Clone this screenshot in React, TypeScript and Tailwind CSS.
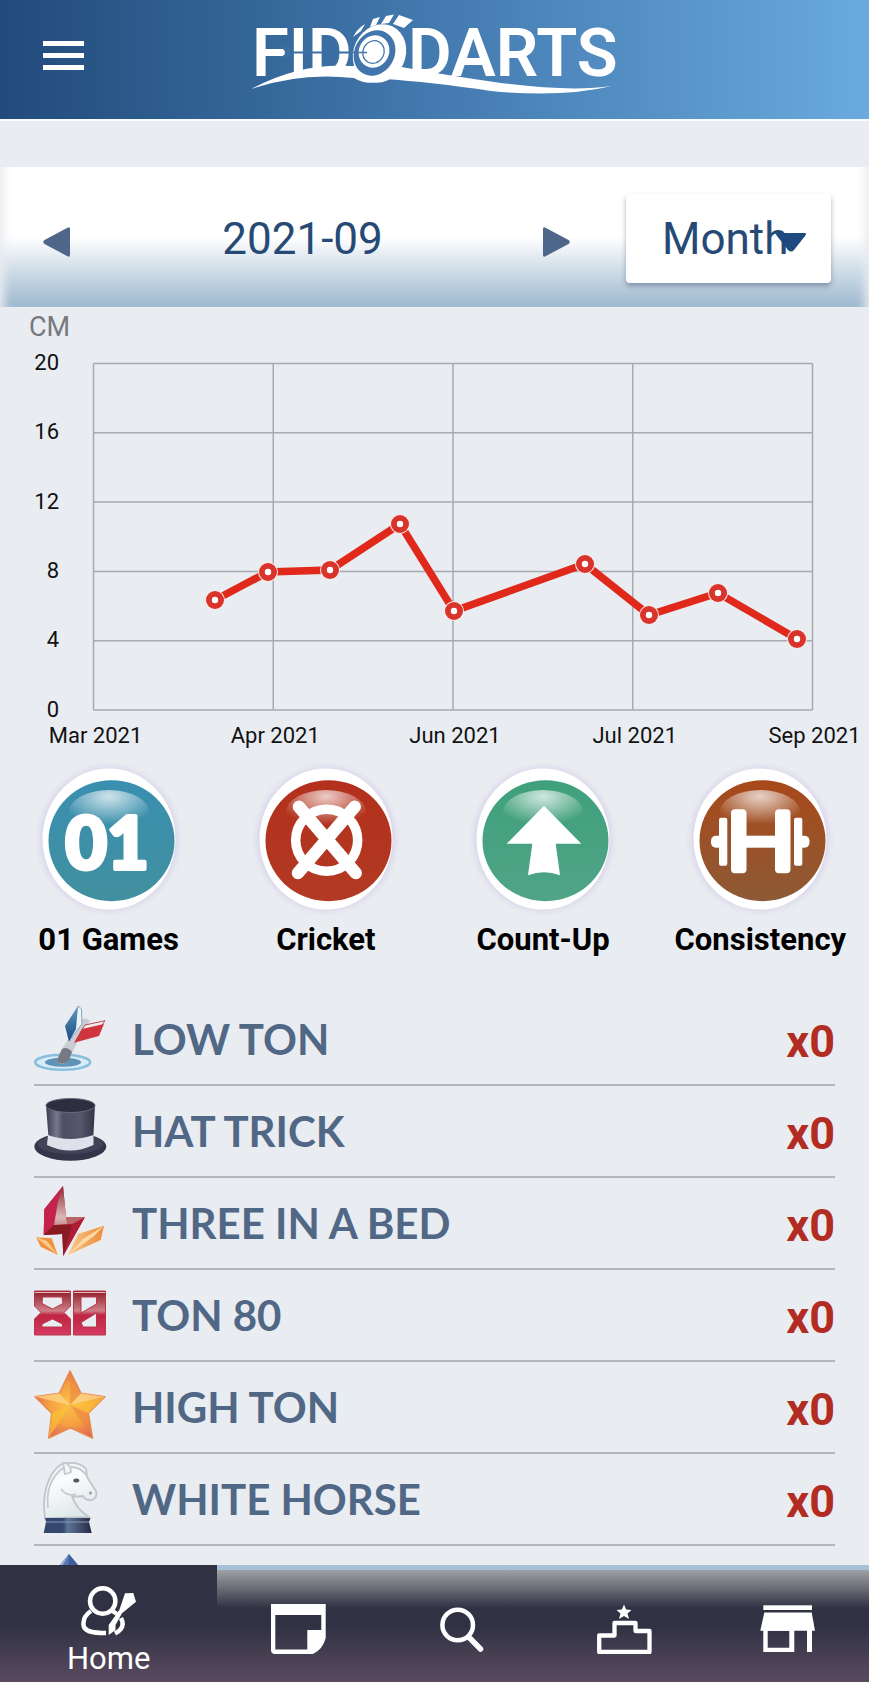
import React from "react"

type Point = { x: number; y: number }

const xLabels = ["Mar 2021", "Apr 2021", "Jun 2021", "Jul 2021", "Sep 2021"]
const yLabels = [20, 16, 12, 8, 4, 0]

const points: Point[] = [
  { x: 215, y: 293 },
  { x: 268, y: 265 },
  { x: 330, y: 263 },
  { x: 400, y: 217 },
  { x: 454, y: 304 },
  { x: 585, y: 257 },
  { x: 649, y: 308 },
  { x: 718, y: 286 },
  { x: 797, y: 332 },
]

const games = [
  { name: "01 Games", top: "#3a8fb0", bottom: "#41909f", icon: <ZeroOneMark /> },
  { name: "Cricket", top: "#b3301c", bottom: "#b23a22", icon: <CricketMark /> },
  { name: "Count-Up", top: "#3fa07c", bottom: "#50a487", icon: <ArrowMark /> },
  { name: "Consistency", top: "#a8491a", bottom: "#8d5a36", icon: <BarbellMark /> },
]

const awards = [
  { name: "LOW TON", count: 0, icon: <DartIcon /> },
  { name: "HAT TRICK", count: 0, icon: <HatIcon /> },
  { name: "THREE IN A BED", count: 0, icon: <BoltIcon /> },
  { name: "TON 80", count: 0, icon: <EightyIcon /> },
  { name: "HIGH TON", count: 0, icon: <StarIcon /> },
  { name: "WHITE HORSE", count: 0, icon: <HorseIcon /> },
]

export default function App() {
  const [period, setPeriod] = React.useState("Month")

  return (
    <div className="flex h-screen flex-col overflow-hidden bg-[#e9ecf1] font-['Roboto',sans-serif]">
      <header className="relative flex h-[119px] shrink-0 items-center justify-center bg-linear-to-r from-[#224b7b] via-[#437aaf] to-[#6aaade]">
        <button aria-label="Menu" className="absolute left-[43px] flex w-[41px] flex-col gap-[7px] pb-2">
          <span className="h-[5px] bg-white" />
          <span className="h-[5px] bg-white" />
          <span className="h-[5px] bg-white" />
        </button>
        <Logo />
      </header>

      <main className="min-h-0 flex-1 overflow-y-auto border-t-2 border-[#f8fafc] [scrollbar-width:none]">
        {/* Period picker */}
        <section className="mt-[46px] flex h-[140px] items-center bg-linear-to-b from-white from-50% to-[#9db8ce] pt-[2px] pr-[38px] pl-[43px] shadow-[inset_12px_0_10px_-8px_#e9ecf1,inset_-12px_0_10px_-8px_#e9ecf1]">
          <div className="mr-14 flex flex-1 items-center justify-between">
            <button aria-label="Previous" className="pt-2">
              <svg viewBox="0 0 27 30" className="h-[30px] w-[27px]" fill="#4d668a">
                <path d="M27 2V28Q27 31 24 29L1.500 17Q-1 15 1.500 13L24 1Q27 -1 27 2Z" />
              </svg>
            </button>
            <span className="pt-[2px] pr-2 text-[44px] leading-none text-[#264a75]">2021-09</span>
            <button aria-label="Next" className="pt-2">
              <svg viewBox="0 0 27 30" className="h-[30px] w-[27px]" fill="#4d668a">
                <path d="M0 2V28Q0 31 3 29L25.500 17Q28 15 25.500 13L3 1Q0 -1 0 2Z" />
              </svg>
            </button>
          </div>
          <div className="relative">
            <select
              aria-label="Period"
              value={period}
              onChange={(e) => setPeriod(e.target.value)}
              className="h-[89px] w-[205px] appearance-none rounded-sm bg-white pt-[2px] pl-9 text-[44px] text-[#264a75] shadow-[0_3px_5px_rgba(60,80,110,0.45)] outline-none"
            >
              <option>Month</option>
            </select>
            <svg viewBox="0 0 30 19" className="pointer-events-none absolute top-[39px] right-[25px] h-[19px] w-[30px]" fill="#1f4a80">
              <path d="M1 0H29Q31 1 29 3L18 17Q15 20 12 17L1 3Q-1 1 1 0Z" />
            </svg>
          </div>
        </section>

        <Chart />

        {/* Games */}
        <section className="grid grid-cols-4 pt-[6px]">
          {games.map((game, i) => (
            <button key={game.name} className="flex flex-col items-center">
              <svg viewBox="0 0 150 156" className="h-[156px] w-[150px] overflow-visible">
                <defs>
                  <linearGradient id={`ball${i}`} x1="0" y1="0" x2="0" y2="1">
                    <stop offset="0" stopColor={game.top} />
                    <stop offset="1" stopColor={game.bottom} />
                  </linearGradient>
                  <radialGradient id={`glow${i}`}>
                    <stop offset="0.850" stopColor="#d3cbe8" />
                    <stop offset="1" stopColor="#e4e2f0" stopOpacity="0" />
                  </radialGradient>
                  <radialGradient id={`shine${i}`} cx="0.500" cy="0.150" r="0.800">
                    <stop offset="0" stopColor="#fff" stopOpacity="0.750" />
                    <stop offset="0.800" stopColor="#fff" stopOpacity="0" />
                  </radialGradient>
                </defs>
                <ellipse cx="75" cy="76" rx="75" ry="78" fill={`url(#glow${i})`} />
                <ellipse cx="75" cy="76" rx="66.500" ry="70.500" fill="#fff" />
                <ellipse cx="77.500" cy="77.700" rx="63" ry="60.500" fill={`url(#ball${i})`} />
                <ellipse cx="75" cy="49" rx="40" ry="22" fill={`url(#shine${i})`} />
                {game.icon}
              </svg>
              <span className="pt-px text-[31px] leading-10 font-bold text-black">{game.name}</span>
            </button>
          ))}
        </section>

        {/* Awards */}
        <ul className="mt-[34px] px-[34px]">
          {awards.map((award) => (
            <li key={award.name} className="flex h-[92px] items-center gap-[26px] border-b-2 border-[#b3b6be]">
              {award.icon}
              <span className="flex-1 font-['Lato',sans-serif] text-[42px] leading-none font-bold text-[#506785]">{award.name}</span>
              <span className="pt-1 text-[45px] leading-none font-bold text-[#b22c24]">x{award.count}</span>
            </li>
          ))}
          <li className="flex h-[92px] items-center">
            <DiamondIcon />
          </li>
        </ul>
      </main>

      <nav className="flex h-[117px] shrink-0 text-white">
        <a
          href="#home"
          className="flex w-1/4 flex-col items-center bg-[linear-gradient(to_bottom,#303243,#303243_52%,#5b4a60)] pt-[21px] text-[31px] leading-9"
        >
          <svg viewBox="0 0 56 50" className="mb-[5px] h-[50px] w-14" fill="none" stroke="#fff" strokeWidth="4.500">
            <circle cx="21.700" cy="15" r="12.700" />
            <path d="M10 25C4 29 2 34 2.500 39C3 45 10 47 25 47M30 24L36 28M40 32Q45 42 34 47.500" />
            <path d="M44 7.300L52.300 7L55 15.700L41 27.300L34.500 39V44L27.700 49V39L38.300 24Z" fill="#fff" stroke="none" />
          </svg>
          Home
        </a>
        {tabs.map((tab) => (
          <a
            key={tab.label}
            href={tab.href}
            aria-label={tab.label}
            className="flex flex-1 items-center justify-center border-t-[5px] border-[#a6c1d6] bg-[linear-gradient(to_bottom,#9fa1a6,#303243_34%,#303243_50%,#5b4a60)] pt-[6px]"
          >
            {tab.icon}
          </a>
        ))}
      </nav>
    </div>
  )
}

const tabs = [
  {
    label: "Schedule",
    href: "#schedule",
    icon: (
      <svg viewBox="0 0 55 50" className="h-[50px] w-[55px]" fill="#fff">
        <path fillRule="evenodd" d="M0 0H54.700V34Q52 45 42 50H4Q0 50 0 46ZM4.300 11V45.500H36.300V26H50.300V11Z" />
      </svg>
    ),
  },
  {
    label: "Search",
    href: "#search",
    icon: (
      <svg viewBox="0 0 44 45" className="h-[45px] w-11" fill="none" stroke="#fff" strokeWidth="4.500">
        <circle cx="17.700" cy="18" r="15.300" />
        <path d="M28.700 30L40.500 42" strokeLinecap="round" strokeWidth="5.500" />
      </svg>
    ),
  },
  {
    label: "Ranking",
    href: "#ranking",
    icon: (
      <svg viewBox="0 0 55 50" className="h-[50px] w-[55px]">
        <path d="M27 0.500L29.200 5.500L34.500 6L30.500 9.500L32 15L27 12L22 15L23.500 9.500L19.500 6L24.800 5.500Z" fill="#fff" />
        <path d="M2.200 31.500H17.500V19H38.500V27H52.500V48H2.200Z" fill="none" stroke="#fff" strokeWidth="4.300" strokeLinejoin="round" />
      </svg>
    ),
  },
  {
    label: "Shop",
    href: "#shop",
    icon: (
      <svg viewBox="0 0 55 50" className="h-[50px] w-[55px]" fill="#fff">
        <rect x="3.300" y="1.300" width="48.700" height="4.700" />
        <path d="M4.300 8.500H51.700L55 26.700H0.300Z" />
        <path fillRule="evenodd" d="M3.300 26H34.300V48H3.300ZM7.700 26.700V43.700H29.300V26.700Z" />
        <rect x="47" y="26" width="5" height="22" />
      </svg>
    ),
  },
]

function Logo() {
  return (
    <svg viewBox="250 0 368 119" className="h-[119px] w-[368px] overflow-visible" role="img" aria-label="FIDO DARTS">
      <g fill="#fff" fontFamily="Roboto, sans-serif" fontSize="67" fontWeight="600">
        <text x="251" y="76">FID</text>
        <text x="407" y="76">DARTS</text>
      </g>
      <path d="M284 52.500H366" stroke="#3d6fa5" strokeWidth="1.800" />
      <path d="M279 47L286 52.500L279 58H290V47Z" fill="#3d6da1" />
      <path
        d="M251 88.700Q298 63 350 66L395 66Q450 76 500 83Q570 92 611 86Q560 98 490 91Q430 82 383 79Q368 87 353 78Q300 72 251 88.700Z"
        fill="#fff"
      />
      <ellipse cx="378.500" cy="53.500" rx="26" ry="30" fill="#fff" transform="rotate(25 378.500 53.500)" />
      <g fill="#4275ab">
        <ellipse cx="373.500" cy="53" rx="20" ry="23.500" transform="rotate(30 373.500 53)" />
        <ellipse cx="373" cy="51.500" rx="15" ry="16.500" fill="#fff" transform="rotate(30 373 51.500)" />
        <ellipse cx="372.500" cy="52" rx="10.500" ry="11.500" fill="none" stroke="#4275ab" strokeWidth="1.300" transform="rotate(30 372.500 52)" />
      </g>
      <path d="M350 52.500H366" stroke="#4275ab" strokeWidth="1.500" />
      <g fill="#fff">
        <path d="M364 24L360 31L352 37Q356 29 364 24Z" />
        <path d="M372 19L379 17L375 25L369 27Z" />
        <path d="M385 16L393 14.500L388 23L380 24Z" />
        <path d="M398 15L412 20L403 28L392 24Z" />
      </g>
    </svg>
  )
}

function Chart() {
  const left = 93.5
  const top = 56.5
  const colWidth = 179.75
  const rowHeight = 69.3

  return (
    <svg viewBox="0 0 869 450" className="block w-full" fontFamily="Roboto, sans-serif" fontSize="22" role="img" aria-label="CM by month">
      <text x="29" y="29" fontSize="27" fill="#77797e">CM</text>
      <g stroke="#a7aab1" strokeWidth="1.500">
        {yLabels.map((label, i) => (
          <line key={label} x1={left} x2={left + colWidth * 4} y1={top + rowHeight * i} y2={top + rowHeight * i} />
        ))}
        {xLabels.map((label, i) => (
          <line key={label} x1={left + colWidth * i} x2={left + colWidth * i} y1={top} y2={top + rowHeight * 5} />
        ))}
      </g>
      <g textAnchor="end" fill="#111">
        {yLabels.map((label, i) => (
          <text key={label} x="59" y={63 + rowHeight * i}>{label}</text>
        ))}
      </g>
      <g textAnchor="middle" fill="#111">
        {xLabels.map((label, i) => (
          <text key={label} x={left + 2 + colWidth * i} y="436">{label}</text>
        ))}
      </g>
      <polyline points={points.map((p) => `${p.x},${p.y}`).join(" ")} fill="none" stroke="#e0281b" strokeWidth="7.500" />
      {points.map((p) => (
        <g key={p.x}>
          <circle cx={p.x} cy={p.y} r="10" fill="#fbe9e8" />
          <circle cx={p.x} cy={p.y} r="9" fill="#d9342c" />
          <circle cx={p.x} cy={p.y} r="3.200" fill="#fff" />
        </g>
      ))}
    </svg>
  )
}

function ZeroOneMark() {
  return (
    <text
      x="73"
      y="106"
      textAnchor="middle"
      fill="#fff"
      stroke="#fff"
      strokeWidth="4"
      strokeLinejoin="round"
      fontFamily="Lato, sans-serif"
      fontSize="72"
      fontWeight="900"
    >
      01
    </text>
  )
}

function CricketMark() {
  return (
    <g fill="none" stroke="#fff">
      <circle cx="75.700" cy="77.300" r="31" strokeWidth="9.500" />
      <path d="M48 43.700L104.700 110M103.700 43.700L47 110" strokeWidth="12.500" strokeLinecap="round" />
    </g>
  )
}

function ArrowMark() {
  return <path d="M76 42.700L113.300 80.700H87.700L92 112.300Q76 106 60 112.300L64.300 80.700H38.700Z" fill="#fff" />
}

function BarbellMark() {
  return (
    <g fill="#fff">
      <rect x="46" y="46.300" width="15.500" height="64" rx="4" />
      <rect x="90" y="46.300" width="15.500" height="64" rx="4" />
      <rect x="34" y="54.700" width="8.300" height="48" rx="2" />
      <rect x="109" y="54.700" width="8.300" height="48" rx="2" />
      <rect x="58" y="72.700" width="35" height="12" />
      <rect x="26" y="72.700" width="12" height="12" rx="5" />
      <rect x="113" y="72.700" width="11.500" height="12" rx="5" />
    </g>
  )
}

const awardIcon = "h-[72px] w-[72px] shrink-0 overflow-visible"

function DartIcon() {
  return (
    <svg viewBox="0 0 72 72" className={awardIcon}>
      <defs>
        <linearGradient id="flightBlue" x1="0" y1="0" x2="0" y2="1">
          <stop offset="0" stopColor="#5f9bc4" />
          <stop offset="1" stopColor="#164a80" />
        </linearGradient>
      </defs>
      <ellipse cx="28.700" cy="59.300" rx="27.500" ry="7.500" fill="#d8ecf7" stroke="#86bfdd" strokeWidth="2.500" />
      <ellipse cx="29" cy="59.300" rx="18" ry="4.500" fill="#5f93b8" />
      <path d="M22.500 58L28 46L46 18Q52 13 56 18L51 24L35 56Q28 65 22.500 58Z" fill="#c9ccd3" />
      <path d="M22.500 58L28 46Q33 43 38 49L35 57Q28 64 22.500 58Z" fill="#777983" />
      <path d="M44 3L47.500 6L48 21L35 38Z" fill="#eef3f8" stroke="#86a3bd" />
      <path d="M44 3L31 23L35 38.500L42 26Z" fill="url(#flightBlue)" />
      <path d="M71 17.700L51 22L46 30L66 25Z" fill="#f5e9ea" stroke="#ad5258" />
      <path d="M40 39.700L48 26L70 21L65 33Z" fill="#d0353d" />
    </svg>
  )
}

function HatIcon() {
  return (
    <svg viewBox="0 0 72 72" className={awardIcon}>
      <defs>
        <linearGradient id="hatBody">
          <stop offset="0" stopColor="#3a3b4d" />
          <stop offset="0.220" stopColor="#77788b" />
          <stop offset="0.350" stopColor="#4d4e61" />
          <stop offset="0.700" stopColor="#56576a" />
          <stop offset="1" stopColor="#34354a" />
        </linearGradient>
      </defs>
      <ellipse cx="36.300" cy="51.700" rx="36" ry="14" fill="#343548" />
      <ellipse cx="36.300" cy="49" rx="33" ry="10" fill="#424357" />
      <path d="M12 10L15 49Q36 62 59 49L61 10Z" fill="url(#hatBody)" />
      <path d="M14 40Q36 48 59.500 40V50Q36 61 13 50Z" fill="#dfe0ea" />
      <ellipse cx="36.500" cy="10.500" rx="24.500" ry="7" fill="#2d2e40" stroke="#6a6b7d" />
    </svg>
  )
}

function BoltIcon() {
  return (
    <svg viewBox="0 0 72 72" className={awardIcon}>
      <defs>
        <linearGradient id="boltFace" x1="0" y1="0" x2="0" y2="1">
          <stop offset="0" stopColor="#8a2a32" />
          <stop offset="0.800" stopColor="#dcb8b8" />
          <stop offset="1" stopColor="#c98f8f" />
        </linearGradient>
        <linearGradient id="boltShard">
          <stop offset="0" stopColor="#f9c98d" />
          <stop offset="1" stopColor="#f08a34" />
        </linearGradient>
      </defs>
      <path d="M34 68L44 47L70 38.700L66.700 53Z" fill="url(#boltShard)" />
      <path d="M34 68L49 52L70 38.700L60 49Z" fill="#fcd9a5" />
      <path d="M2 50.300L17.700 51.300L23.700 68L6.700 59.700Z" fill="#f0933e" />
      <path d="M2 50.300L13 54L23.700 68Z" fill="#f8c98c" />
      <path d="M29 -1L10.300 22.300L9.700 48L28.300 47L29.300 69L51 30.300H32Z" fill="#b01c33" />
      <path d="M10.300 22.300L9.700 48L20 38L24 14L29 -1Z" fill="#c4234d" />
      <path d="M29 -1L24 14L20 38L34 37L32 30.300Z" fill="url(#boltFace)" />
      <path d="M32 30.300H51L38 37H33Z" fill="#b9666a" />
      <path d="M9.700 48L20 38H38L29.300 69L28.300 47Z" fill="#8a1a22" />
    </svg>
  )
}

function EightyIcon() {
  return (
    <svg viewBox="0 0 72 72" className={awardIcon}>
      <defs>
        <linearGradient id="tileRed" x1="0" y1="0" x2="0" y2="1">
          <stop offset="0" stopColor="#8f1c27" />
          <stop offset="0.450" stopColor="#cf7f88" />
          <stop offset="0.550" stopColor="#bf2440" />
          <stop offset="1" stopColor="#d63a62" />
        </linearGradient>
      </defs>
      <g fill="url(#tileRed)" fillRule="evenodd" stroke="#b5384c">
        <path d="M0.500 12H36.500V27L30 33.500L36.500 40V56H0.500V40L7 33.500L0.500 27ZM8.500 18L8 24.500L18.500 30L29 24.500L28 18ZM18.500 40L8 45V48H28.500V45Z" />
        <path d="M39.500 12H71.500V56H39.500ZM47 18V34L62.500 25V18ZM62.500 34L47 43.500L49 48H62.500Z" />
      </g>
      <path d="M1 13.500H36M40 13.500H71" stroke="#e8b9bf" />
    </svg>
  )
}

function StarIcon() {
  return (
    <svg viewBox="0 0 72 72" className={awardIcon}>
      <defs>
        <radialGradient id="starFill" cx="0.500" cy="0.500" r="0.550">
          <stop offset="0" stopColor="#fbc04c" />
          <stop offset="0.550" stopColor="#f5a040" />
          <stop offset="1" stopColor="#e0605a" />
        </radialGradient>
      </defs>
      <path
        d="M36 0L47 22.300L71 25.700L54.300 42.300L58.500 67L36.300 56.700L14.700 67L17.700 42.300L1 25.700L25.300 22.300Z"
        fill="url(#starFill)"
        stroke="#e88a4c"
        strokeWidth="1.500"
        strokeLinejoin="round"
      />
      <path d="M36 34L47 22.300L71 25.700ZM36 34L25.300 22.300L1 25.700Z" fill="#fddc92" opacity="0.700" />
      <path d="M36 34L17.700 42.300L14.700 67ZM36 34L54.300 42.300L71 25.700Z" fill="#fcc636" opacity="0.600" />
      <path d="M36 34V0L47 22.300ZM36 34L58.500 67L54.300 42.300Z" fill="#ea7f45" opacity="0.500" />
    </svg>
  )
}

function HorseIcon() {
  return (
    <svg viewBox="0 0 72 72" className={awardIcon}>
      <defs>
        <linearGradient id="horseBody" x1="0" y1="0" x2="0.400" y2="1">
          <stop offset="0" stopColor="#e9eaee" />
          <stop offset="0.400" stopColor="#fbfcfd" />
          <stop offset="1" stopColor="#dfe9e9" />
        </linearGradient>
        <linearGradient id="horseBase">
          <stop offset="0.400" stopColor="#34476f" />
          <stop offset="0.500" stopColor="#5e7596" />
          <stop offset="1" stopColor="#262843" />
        </linearGradient>
      </defs>
      <path
        d="M11 55.300C8 35 12 10 29 0L34 0Q46 -1 52 6L53 14L62 28Q64 35 58 37Q52 38 49 33Q43 34 38 33Q41 45 55 54Z"
        fill="url(#horseBody)"
        stroke="#c2c4cb"
        strokeWidth="1.800"
      />
      <path d="M14 45C12 28 17 14 29 5M29 0L31 11L37 9Q37 3 32 0M37 4Q47 4 52 12M27 26Q33 34 42 31" fill="none" stroke="#c8cad0" strokeWidth="1.800" />
      <ellipse cx="42.300" cy="17.500" rx="3" ry="2" fill="#55565f" />
      <circle cx="56.500" cy="30" r="1.500" fill="#9a9ca4" />
      <path d="M11 55H56.500L55 59L57.700 70H9.700L12 59Z" fill="url(#horseBase)" />
      <path d="M12 59H55" stroke="#8b9ab5" />
    </svg>
  )
}

function DiamondIcon() {
  return (
    <svg viewBox="0 0 72 72" className={awardIcon}>
      <path d="M35 -2L60 28L35 72L10 28Z" fill="#3f5e9f" />
      <path d="M35 -2L29 14L20 28L10 28Z" fill="#9db4dc" />
      <path d="M35 -2L33 28H18Z" fill="#5578b8" />
    </svg>
  )
}
